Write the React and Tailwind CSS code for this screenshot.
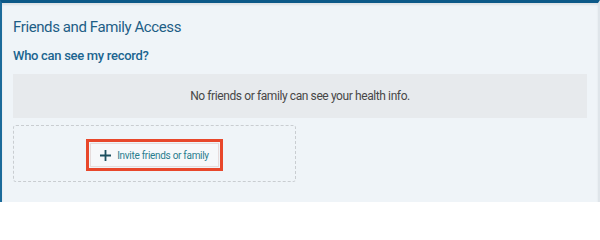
import React from 'react';

const PlusIcon = () => (
  <svg width="11" height="11" viewBox="0 0 11 11" className="shrink-0">
    <path d="M5.5 0v11M0 5.5h11" stroke="#1d4f5e" strokeWidth="1.8" fill="none" />
  </svg>
);

const App = () => {
  return (
    <div
      className="w-[600px] h-[202px] overflow-hidden bg-[#eff4f8] border-t-[3px] border-t-[#0c5988] border-l-2 border-l-[#1c6b9b] border-r-2 border-r-[#dfe5ea] px-[11px] shadow-[inset_0_2px_2px_rgba(0,0,0,0.08)]"
      style={{ fontFamily: 'Roboto, "Open Sans", sans-serif' }}
    >
      {/* Header */}
      <h2 className="pt-[15px] text-[15px] leading-[18px] tracking-[-0.4px] text-[#1d5e86]">Friends and Family Access</h2>
      <h3 className="mt-[12px] text-[13px] leading-[16px] font-medium tracking-[-0.3px] text-[#1b6590]">Who can see my record?</h3>

      {/* Empty state */}
      <div className="mt-[10px] h-[44px] bg-[#e7eaed] flex items-center justify-center text-[12px] tracking-[-0.4px] text-[#474747]">
        No friends or family can see your health info.
      </div>

      {/* Invite */}
      <div className="mt-[7px] w-[283px] h-[57px] border border-dashed border-[#c9cdd1] rounded-[3px] flex items-center justify-center pt-[3px]">
        <div className="border-[3px] border-[#e8472b] p-[1px]">
          <button className="w-[129px] h-[24px] flex items-center justify-center gap-[6px] bg-[#f6f8fa] border border-[#e6dcdc] text-[10px] whitespace-nowrap tracking-[-0.3px] text-[#2a7d8e]">
            <PlusIcon />
            <span>Invite friends or family</span>
          </button>
        </div>
      </div>
    </div>
  );
};

export default App;
